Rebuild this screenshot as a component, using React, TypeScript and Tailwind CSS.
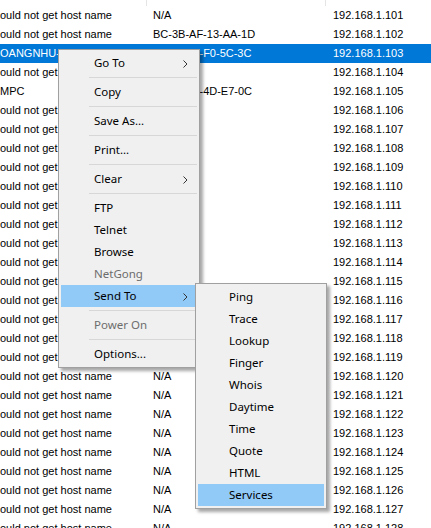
import { ReactNode } from "react";

type Row = { name: string; mac: string; ip: string; selected?: boolean };

const rows: Row[] = Array.from({ length: 28 }, (_, i) => ({
  name: "ould not get host name",
  mac: "N/A",
  ip: `192.168.1.${101 + i}`,
}));
rows[1].mac = "BC-3B-AF-13-AA-1D";
rows[2] = { name: "OANGNHU-PC", mac: "34-E7-0B-F0-5C-3C", ip: "192.168.1.103", selected: true };
rows[4] = { name: "MPC", mac: "00-1A-2B-4D-E7-0C", ip: "192.168.1.105" };

function Chevron() {
  return (
    <svg width="5" height="8" viewBox="0 0 5 8" className="absolute right-[9px] top-[8px]">
      <path d="M0.5 0.5 L4 4 L0.5 7.5" fill="none" stroke="#333" strokeWidth="1" />
    </svg>
  );
}

function Item({
  children,
  sub,
  disabled,
  active,
  inset = "pl-[33px]",
}: {
  children: ReactNode;
  sub?: boolean;
  disabled?: boolean;
  active?: boolean;
  inset?: string;
}) {
  return (
    <div
      className={`relative flex h-[22px] items-center ${inset} ${active ? "bg-[#91c9f7]" : ""} ${
        disabled ? "text-[#6d6d6d]" : "text-black"
      }`}
    >
      {children}
      {sub && <Chevron />}
    </div>
  );
}

function Sep() {
  return (
    <div className="flex h-[7px] items-center pl-[28px]">
      <div className="h-px w-full bg-[#d7d7d7]" />
    </div>
  );
}

const subItems = ["Ping", "Trace", "Lookup", "Finger", "Whois", "Daytime", "Time", "Quote", "HTML", "Services"];

export default function App() {
  return (
    <div
      className="relative h-[528px] w-[431px] overflow-hidden bg-white text-[11px] text-black"
      style={{ fontFamily: '"Liberation Sans", Arial, sans-serif' }}
    >
      {/* header remnant */}
      <div className="flex h-[6px]">
        <div className="w-[147px] border-r border-[#e5e5e5]" />
        <div className="w-[179px] border-r border-[#e5e5e5]" />
      </div>

      {/* rows */}
      {rows.map((r) => (
        <div
          key={r.ip}
          className={`flex h-[19px] items-center whitespace-nowrap ${
            r.selected ? "bg-[#0078d7] text-white" : ""
          }`}
        >
          <div className="w-[147px] overflow-hidden">{r.name}</div>
          <div className="w-[179px] pl-[6px]">{r.mac}</div>
          <div className="pl-[7px]">{r.ip}</div>
        </div>
      ))}

      {/* context menu */}
      <div
        className="absolute left-[58px] top-[49px] w-[142px] border border-[#a0a0a0] bg-[#f0f0f0] p-[2px] text-[11.5px] shadow-[3px_3px_3px_rgba(0,0,0,0.35)]"
        style={{ fontFamily: '"Noto Sans", "Segoe UI", sans-serif' }}
      >
        <Item sub>Go To</Item>
        <Sep />
        <Item>Copy</Item>
        <Sep />
        <Item>Save As...</Item>
        <Sep />
        <Item>Print...</Item>
        <Sep />
        <Item sub>Clear</Item>
        <Sep />
        <Item>FTP</Item>
        <Item>Telnet</Item>
        <Item>Browse</Item>
        <Item disabled>NetGong</Item>
        <Item sub active>
          Send To
        </Item>
        <Sep />
        <Item disabled>Power On</Item>
        <Sep />
        <Item>Options...</Item>
      </div>

      {/* submenu */}
      <div
        className="absolute left-[195px] top-[283px] w-[132px] border border-[#a0a0a0] bg-[#f0f0f0] p-[2px] text-[11.5px] shadow-[3px_3px_3px_rgba(0,0,0,0.35)]"
        style={{ fontFamily: '"Noto Sans", "Segoe UI", sans-serif' }}
      >
        {subItems.map((s) => (
          <Item key={s} inset="pl-[31px]" active={s === "Services"}>
            {s}
          </Item>
        ))}
      </div>
    </div>
  );
}
